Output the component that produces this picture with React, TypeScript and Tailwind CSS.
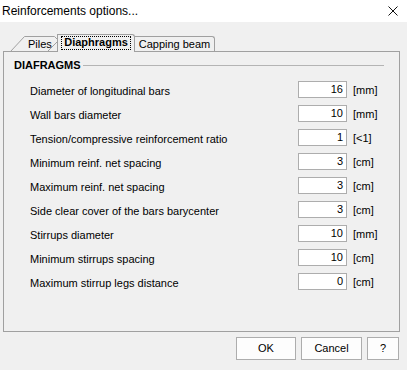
import React from "react";

const rows: { label: string; value: string; unit: string }[] = [
  { label: "Diameter of longitudinal bars", value: "16", unit: "[mm]" },
  { label: "Wall bars diameter", value: "10", unit: "[mm]" },
  { label: "Tension/compressive reinforcement ratio", value: "1", unit: "[<1]" },
  { label: "Minimum reinf. net spacing", value: "3", unit: "[cm]" },
  { label: "Maximum reinf. net spacing", value: "3", unit: "[cm]" },
  { label: "Side clear cover of the bars barycenter", value: "3", unit: "[cm]" },
  { label: "Stirrups diameter", value: "10", unit: "[mm]" },
  { label: "Minimum stirrups spacing", value: "10", unit: "[cm]" },
  { label: "Maximum stirrup legs distance", value: "0", unit: "[cm]" },
];

export default function App() {
  return (
    <div
      className="w-[407px] h-[370px] bg-[#f0f0f0] text-black overflow-hidden"
      style={{ fontFamily: '"Liberation Sans", Arial, sans-serif' }}
    >
      {/* Title bar */}
      <div className="h-[22px] bg-white flex items-center justify-between pl-[2px] pr-[9px]">
        <span className="text-[12px] leading-[14px]">Reinforcements options...</span>
        <svg width="10" height="10" viewBox="0 0 10 10" className="block">
          <path d="M0.5 0.5 L9.5 9.5 M9.5 0.5 L0.5 9.5" stroke="#111" strokeWidth="1" fill="none" />
        </svg>
      </div>

      {/* Tab strip */}
      <div className="h-[29px] flex items-end pl-[10px] text-[11px]">
        <div className="relative w-[47px] h-[15px]">
          <svg width="48" height="16" viewBox="0 0 48 16" className="absolute left-0 top-0">
            <path d="M0.5 15.5 L14.5 0.5 L44.5 0.5 L47.5 3.5" stroke="#a0a0a0" fill="none" strokeWidth="1" />
            <path d="M37.5 15.5 L47.5 5.5" stroke="#a0a0a0" fill="none" strokeWidth="1" />
          </svg>
          <span className="absolute left-[18px] top-[2px] leading-[13px]">Piles</span>
        </div>
        <div className="relative z-10 w-[78px] h-[18px] mb-[-1px] border border-b-0 border-[#a0a0a0] rounded-tr-[3px] bg-[#f0f0f0] flex justify-center pt-[2px]">
          <span className="font-bold leading-[11px] h-[12px] px-[2px] outline outline-1 outline-dotted outline-black">
            Diaphragms
          </span>
        </div>
        <div className="w-[80px] h-[15px] border border-b-0 border-l-0 border-[#a0a0a0] rounded-tr-[3px] flex justify-center pt-[1px]">
          <span className="leading-[13px]">Capping beam</span>
        </div>
      </div>

      {/* Panel */}
      <div className="ml-[3px] w-[397px] h-[281px] border border-[#a0a0a0] text-[11px]">
        <div className="flex items-center pl-[10px] pr-[15px] pt-[6px] h-[20px]">
          <span className="font-bold leading-[14px]">DIAFRAGMS</span>
          <div className="flex-1 h-px bg-[#b4b4b4] ml-[2px]" />
        </div>
        <div className="mt-[7px] pl-[26px]">
          {rows.map((r) => (
            <div key={r.label} className="flex items-start h-[24px]">
              <div className="w-[268px] pt-[6px] leading-[13px] whitespace-nowrap">{r.label}</div>
              <div className="mt-[2px] w-[49px] h-[17px] bg-white border border-[#adadad] flex items-center justify-end pr-[3px] leading-[13px]">
                {r.value}
              </div>
              <div className="pl-[6px] pt-[5px] leading-[13px]">{r.unit}</div>
            </div>
          ))}
        </div>
      </div>

      {/* Buttons */}
      <div className="flex justify-end gap-[5px] pr-[8px] mt-[5px] text-[11px]">
        <button className="w-[60px] h-[23px] bg-[#fdfdfd] border border-[#adadad] leading-[13px]">OK</button>
        <button className="w-[61px] h-[23px] bg-[#fdfdfd] border border-[#adadad] leading-[13px]">Cancel</button>
        <button className="w-[32px] h-[23px] bg-[#fdfdfd] border border-[#adadad] leading-[13px]">?</button>
      </div>
    </div>
  );
}
